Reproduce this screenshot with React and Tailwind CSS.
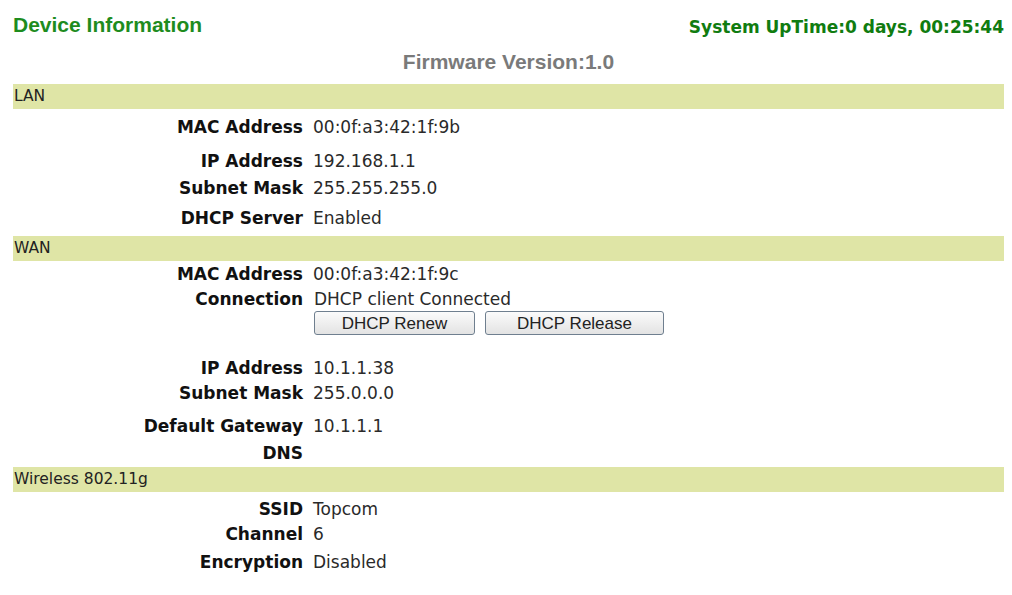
import React from "react";

const V = { fontFamily: '"DejaVu Sans", Verdana, sans-serif' };
const A = { fontFamily: '"Liberation Sans", Arial, sans-serif' };

function Bar({ children }) {
  return (
    <div className="h-[25px] bg-[#dfe5a6] flex items-center text-[15.5px] text-[#222] pl-[1px]" style={V}>
      {children}
    </div>
  );
}

function Row({ label, value, h, mt = "" }) {
  return (
    <div className={`flex items-center ${h} ${mt}`} style={V}>
      <div className="w-[290px] text-right font-bold text-[17px] text-[#111]">{label}</div>
      <div className="pl-[10px] text-[17px] text-[#2a2a2a]">{value}</div>
    </div>
  );
}

function Btn({ children, w }) {
  return (
    <button
      className={`${w} h-[24px] rounded-[3px] border border-[#6f7f8f] bg-gradient-to-b from-[#fbfbfb] to-[#e3e3e3] text-[17px] text-[#222] leading-none`}
      style={A}
    >
      {children}
    </button>
  );
}

export default function App() {
  return (
    <div className="w-[1012px] h-[595px] bg-white pl-[13px] pr-[8px] overflow-hidden">
      <div className="h-[50px] flex items-center justify-between">
        <div className="font-bold text-[21px] text-[#1e8c1e]" style={A}>Device Information</div>
        <div className="font-bold text-[17px] text-[#107c10] pt-[5px]" style={V}>System UpTime:0 days, 00:25:44</div>
      </div>
      <div className="h-[24px] flex items-center justify-center font-bold text-[21px] text-[#7a7a7a]" style={A}>
        Firmware Version:1.0
      </div>
      <div className="h-[10px]" />
      <Bar>LAN</Bar>
      <Row label="MAC Address" value="00:0f:a3:42:1f:9b" h="h-[38px]" />
      <Row label="IP Address" value="192.168.1.1" h="h-[30px]" />
      <Row label="Subnet Mask" value="255.255.255.0" h="h-[24px]" />
      <Row label="DHCP Server" value="Enabled" h="h-[35px]" />
      <Bar>WAN</Bar>
      <Row label="MAC Address" value="00:0f:a3:42:1f:9c" h="h-[28px]" />
      <div className="flex pb-[21px]" style={V}>
        <div className="w-[290px] h-[22px] flex items-center justify-end font-bold text-[17px] text-[#111]">Connection</div>
        <div className="pl-[11px]">
          <div className="h-[22px] flex items-center text-[17px] text-[#2a2a2a]">DHCP client Connected</div>
          <div className="flex gap-[10px]">
            <Btn w="w-[161px]">DHCP Renew</Btn>
            <Btn w="w-[179px]">DHCP Release</Btn>
          </div>
        </div>
      </div>
      <Row label="IP Address" value="10.1.1.38" h="h-[26px]" />
      <Row label="Subnet Mask" value="255.0.0.0" h="h-[24px]" />
      <Row label="Default Gateway" value="10.1.1.1" h="h-[26px]" mt="mt-[8px]" />
      <Row label="DNS" value="" h="h-[27px]" />
      <Bar>Wireless 802.11g</Bar>
      <Row label="SSID" value="Topcom" h="h-[24px]" mt="mt-[6px]" />
      <Row label="Channel" value="6" h="h-[26px]" />
      <Row label="Encryption" value="Disabled" h="h-[30px]" />
    </div>
  );
}
